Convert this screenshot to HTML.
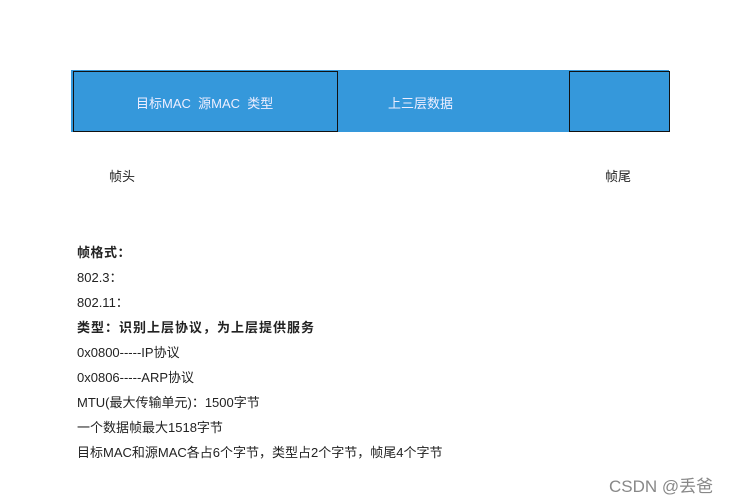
<!DOCTYPE html><html><head><meta charset="utf-8"><style>
body{margin:0;width:734px;height:501px;background:#fff;position:relative;overflow:hidden;font-family:"Liberation Sans","Noto Sans CJK SC",sans-serif;}
.a{position:absolute}
.t{position:absolute;left:77px;font-size:13px;color:#222;line-height:16px;white-space:nowrap}
</style></head><body>
<div class="a" style="left:71px;top:70px;width:598px;height:62px;background:#3598db"></div>
<div class="a" style="left:73px;top:71px;width:263px;height:59px;border:1px solid #111"></div>
<div class="a" style="left:569px;top:71px;width:99px;height:59px;border:1px solid #111"></div>
<div class="a" style="left:136px;top:93px;font-size:13px;color:#eef;white-space:pre">目标MAC  源MAC  类型</div>
<div class="a" style="left:388px;top:93px;font-size:13px;color:#eef">上三层数据</div>
<div class="a" style="left:109px;top:166px;font-size:13px;color:#222">帧头</div>
<div class="a" style="left:605px;top:166px;font-size:13px;color:#222">帧尾</div>
<div class="t" style="top:245px;font-weight:bold;letter-spacing:0.5px">帧格式：</div>
<div class="t" style="top:270px">802.3：</div>
<div class="t" style="top:295px">802.11：</div>
<div class="t" style="top:320px;font-weight:bold;letter-spacing:1px">类型：识别上层协议，为上层提供服务</div>
<div class="t" style="top:345px">0x0800-----IP协议</div>
<div class="t" style="top:370px">0x0806-----ARP协议</div>
<div class="t" style="top:395px">MTU(最大传输单元)：1500字节</div>
<div class="t" style="top:420px">一个数据帧最大1518字节</div>
<div class="t" style="top:445px">目标MAC和源MAC各占6个字节，类型占2个字节，帧尾4个字节</div>
<div class="a" style="left:609px;top:472px;font-size:17px;color:#888">CSDN @丢爸</div>
</body></html>
